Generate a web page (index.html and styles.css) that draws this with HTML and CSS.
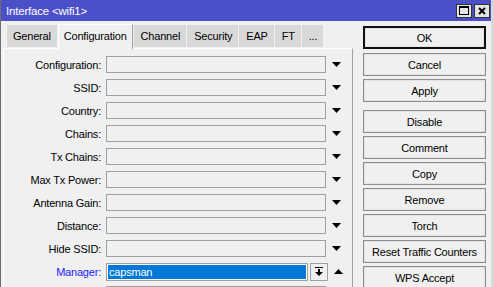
FILE: index.html
```html
<!DOCTYPE html>
<html lang="en">
<head>
    <meta charset="UTF-8">
    <title>Interface &lt;wifi1&gt;</title>
    <link rel="stylesheet" href="styles.css">
</head>
<body>
<div class="window">
    <div class="titlebar">
        <span class="title">Interface &lt;wifi1&gt;</span>
        <span class="tb-btn">
            <svg width="10" height="9" viewBox="0 0 10 9"><rect x="0.5" y="0.5" width="9" height="8" fill="none" stroke="#000"/><rect x="0" y="0" width="10" height="2" fill="#000"/></svg>
        </span>
        <span class="tb-btn">
            <svg width="8" height="8" viewBox="0 0 8 8"><path d="M1 1 L7 7 M7 1 L1 7" stroke="#000" stroke-width="2"/></svg>
        </span>
    </div>

    <div class="content">
        <div class="main">
            <div class="tabs">
                <span class="tab">General</span>
                <span class="tab active">Configuration</span>
                <span class="tab">Channel</span>
                <span class="tab">Security</span>
                <span class="tab">EAP</span>
                <span class="tab">FT</span>
                <span class="tab">...</span>
            </div>

            <div class="panel">
                <div class="row">
                    <span class="label">Configuration:</span>
                    <span class="field"></span>
                    <svg class="arrow" width="9" height="5" viewBox="0 0 9 5"><polygon points="0,0 9,0 4.5,5" fill="#000"/></svg>
                </div>
                <div class="row">
                    <span class="label">SSID:</span>
                    <span class="field"></span>
                    <svg class="arrow" width="9" height="5" viewBox="0 0 9 5"><polygon points="0,0 9,0 4.5,5" fill="#000"/></svg>
                </div>
                <div class="row">
                    <span class="label">Country:</span>
                    <span class="field"></span>
                    <svg class="arrow" width="9" height="5" viewBox="0 0 9 5"><polygon points="0,0 9,0 4.5,5" fill="#000"/></svg>
                </div>
                <div class="row">
                    <span class="label">Chains:</span>
                    <span class="field"></span>
                    <svg class="arrow" width="9" height="5" viewBox="0 0 9 5"><polygon points="0,0 9,0 4.5,5" fill="#000"/></svg>
                </div>
                <div class="row">
                    <span class="label">Tx Chains:</span>
                    <span class="field"></span>
                    <svg class="arrow" width="9" height="5" viewBox="0 0 9 5"><polygon points="0,0 9,0 4.5,5" fill="#000"/></svg>
                </div>
                <div class="row">
                    <span class="label">Max Tx Power:</span>
                    <span class="field"></span>
                    <svg class="arrow" width="9" height="5" viewBox="0 0 9 5"><polygon points="0,0 9,0 4.5,5" fill="#000"/></svg>
                </div>
                <div class="row">
                    <span class="label">Antenna Gain:</span>
                    <span class="field"></span>
                    <svg class="arrow" width="9" height="5" viewBox="0 0 9 5"><polygon points="0,0 9,0 4.5,5" fill="#000"/></svg>
                </div>
                <div class="row">
                    <span class="label">Distance:</span>
                    <span class="field"></span>
                    <svg class="arrow" width="9" height="5" viewBox="0 0 9 5"><polygon points="0,0 9,0 4.5,5" fill="#000"/></svg>
                </div>
                <div class="row">
                    <span class="label">Hide SSID:</span>
                    <span class="field"></span>
                    <svg class="arrow" width="9" height="5" viewBox="0 0 9 5"><polygon points="0,0 9,0 4.5,5" fill="#000"/></svg>
                </div>
                <div class="row">
                    <span class="label blue">Manager:</span>
                    <span class="field select"><span class="value">capsman</span></span>
                    <span class="drop-btn">
                        <svg width="8" height="9" viewBox="0 0 8 9"><rect x="0" y="0" width="8" height="1" fill="#000"/><rect x="3" y="2" width="2" height="3" fill="#000"/><polygon points="0,5 8,5 4,9" fill="#000"/></svg>
                    </span>
                    <svg class="arrow" width="9" height="5" viewBox="0 0 9 5"><polygon points="0,5 9,5 4.5,0" fill="#000"/></svg>
                </div>
                <div class="row">
                    <span class="label"></span>
                    <span class="field"></span>
                </div>
            </div>
        </div>

        <div class="actions">
            <button class="btn default">OK</button>
            <button class="btn">Cancel</button>
            <button class="btn group-end">Apply</button>
            <button class="btn">Disable</button>
            <button class="btn">Comment</button>
            <button class="btn">Copy</button>
            <button class="btn">Remove</button>
            <button class="btn">Torch</button>
            <button class="btn">Reset Traffic Counters</button>
            <button class="btn">WPS Accept</button>
        </div>
    </div>
</div>
</body>
</html>
```

FILE: styles.css
```css
* {
    margin: 0;
    padding: 0;
    box-sizing: border-box;
}

body {
    font-family: "Liberation Sans", Arial, sans-serif;
    font-size: 11px;
    letter-spacing: -0.2px;
    color: #000;
    background: #f0f0f0;
    width: 494px;
    height: 287px;
    overflow: hidden;
}

.window {
    height: 287px;
    border-left: 1px solid #707070;
    border-right: 3px solid #d8d8d8;
    overflow: hidden;
}

.titlebar {
    height: 21px;
    background: #4c50c8;
    display: flex;
    align-items: center;
    padding: 0 1px 0 5px;
    gap: 2px;
}

.title {
    color: #fff;
    font-size: 11.5px;
    flex: 1;
}

.tb-btn {
    width: 16px;
    height: 14px;
    background: #e4e4e4;
    border: 1px solid #333;
    display: flex;
    align-items: center;
    justify-content: center;
}

.content {
    display: flex;
}

.main {
    width: 352px;
    padding: 2px 0 0 2px;
}

.tabs {
    display: flex;
    align-items: flex-end;
    height: 25px;
    padding-left: 4px;
    position: relative;
    z-index: 1;
}

.tab {
    height: 22px;
    margin-bottom: 1px;
    margin-right: 1px;
    padding: 0 6px 0 7px;
    line-height: 22px;
    background: #d9d9d9;
}

.tab:first-child {
    padding: 0 6px;
}

.tab.active {
    height: 25px;
    margin-bottom: -1px;
    line-height: 22px;
    padding: 0 5px;
    background: #f0f0f0;
    border-top: 1px solid #fff;
    border-left: 1px solid #fff;
    border-right: 1px solid #a0a0a0;
}

.panel {
    border-top: 1px solid #fff;
    border-left: 1px solid #fff;
    border-right: 1px solid #a0a0a0;
    padding-top: 7px;
    display: flex;
    flex-direction: column;
    gap: 6px;
    height: 260px;
}

.row {
    display: flex;
    align-items: center;
    height: 17px;
}

.label {
    width: 97px;
    margin-right: 5px;
    text-align: right;
    flex-shrink: 0;
}

.label.blue {
    color: #1a1aff;
}

.field {
    width: 220px;
    height: 17px;
    border: 1px solid #a0a0a0;
    background: #f0f0f0;
    flex-shrink: 0;
}

.field.select {
    width: 202px;
    height: 18px;
    padding: 1px;
    background: #fff;
}

.value {
    display: block;
    height: 100%;
    background: #0078d7;
    color: #fff;
    padding-left: 1px;
    line-height: 15px;
}

.drop-btn {
    width: 18px;
    height: 18px;
    margin-left: 2px;
    border: 1px solid #a0a0a0;
    display: flex;
    align-items: center;
    justify-content: center;
}

.arrow {
    margin-left: 6px;
}

.actions {
    width: 123px;
    margin-left: 10px;
    padding-top: 5px;
    display: flex;
    flex-direction: column;
    gap: 3px;
}

.btn {
    height: 23px;
    font-family: inherit;
    font-size: 11px;
    letter-spacing: -0.2px;
    color: #000;
    background: #f0f0f0;
    border: 1px solid #8c8c8c;
    box-shadow: inset 0 0 0 1px #e2e2e2;
}

.btn.default {
    border: 2px solid #111;
    margin-bottom: 1px;
}

.btn.group-end {
    margin-bottom: 5px;
}
```
